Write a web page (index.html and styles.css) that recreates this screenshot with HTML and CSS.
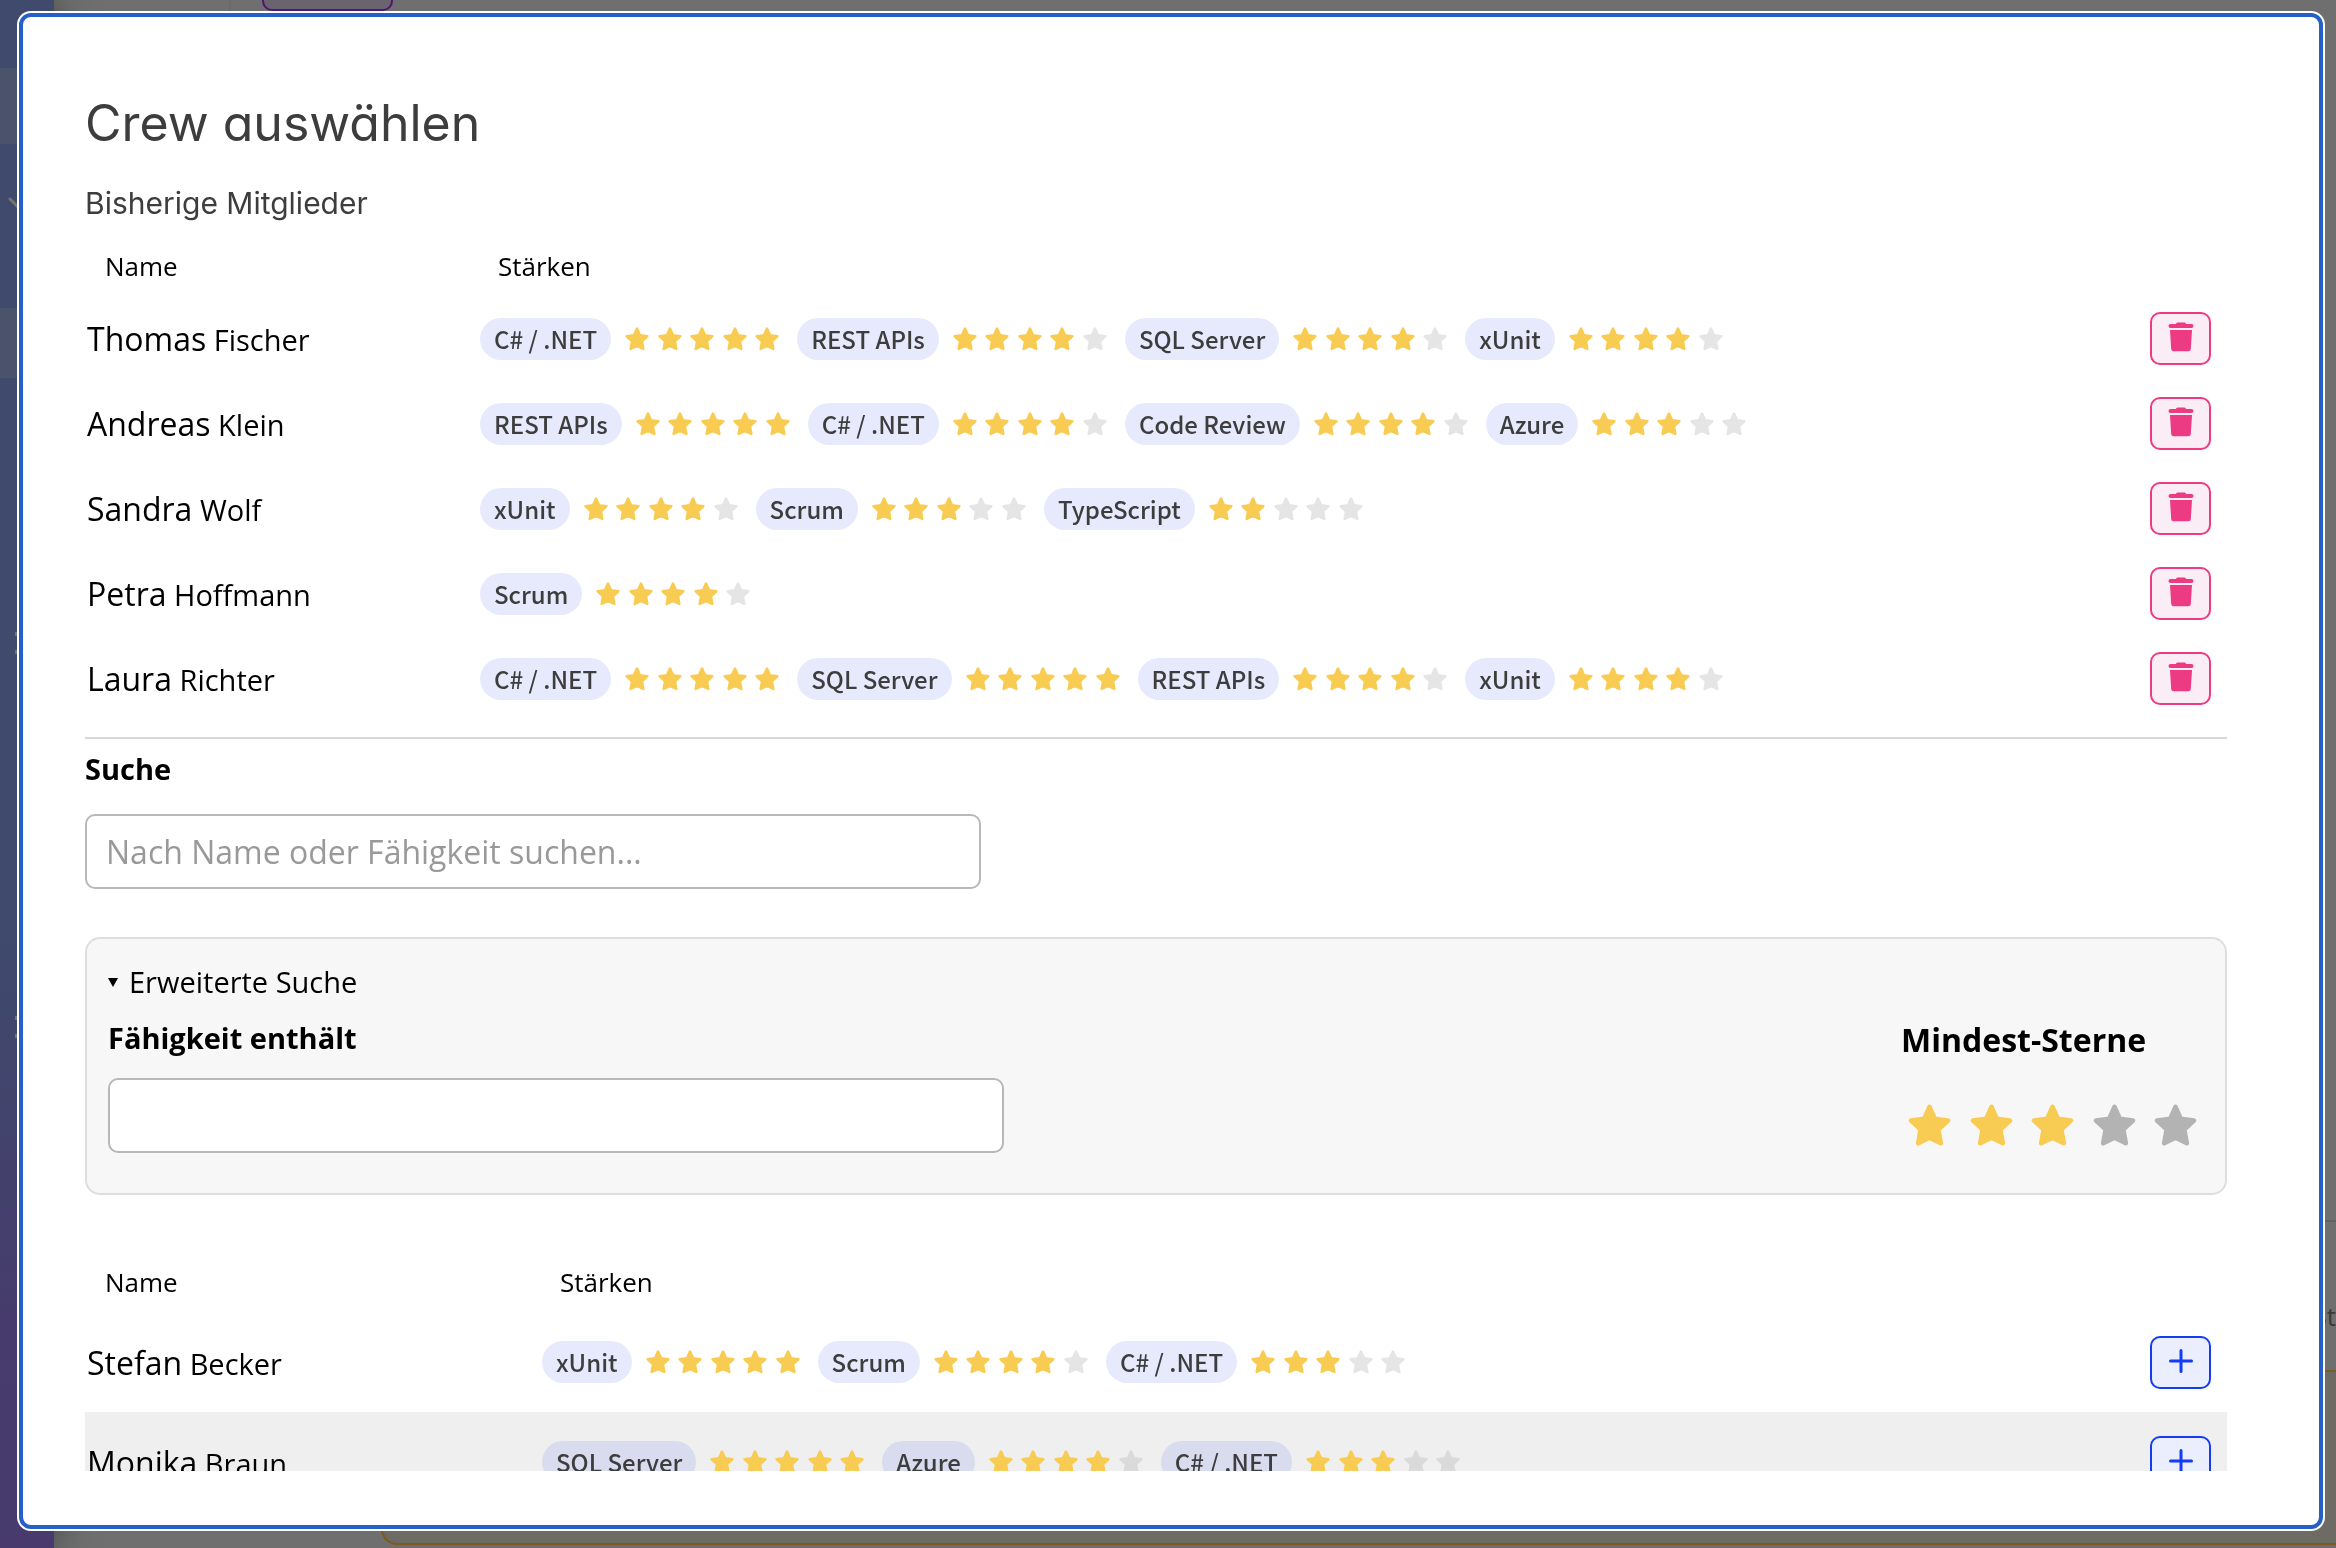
FILE: index.html
```html
<!DOCTYPE html>
<html lang="de">
<head>
<meta charset="utf-8">
<title>Crew auswählen</title>
<link rel="stylesheet" href="styles.css">
</head>
<body>
<svg class="sprite" aria-hidden="true">
  <symbol id="star" viewBox="0 0 24 24"><path d="M12 1.6 15 8.3 22.3 9.2 16.9 14.2 18.3 21.9 12 18.8 5.700 21.900 7.100 14.200 1.700 9.200 9 8.300Z" fill="currentColor" stroke="currentColor" stroke-width="2.600" stroke-linejoin="round"/></symbol>
  <symbol id="trash" viewBox="0 0 26 30"><path d="M9.500 0.500h7q1.500 0 1.500 1.500h5.500a2 2 0 0 1 0 4h-21a2 2 0 0 1 0-4h5.500q0-1.500 1.500-1.500zM2 8h22l-1.200 19a2.500 2.500 0 0 1-2.500 2.300h-14.600a2.500 2.500 0 0 1-2.500-2.300z" fill="currentColor"/></symbol>
  <symbol id="plus" viewBox="0 0 24 24"><path d="M12 1.500v21M1.500 12h21" stroke="currentColor" stroke-width="3" stroke-linecap="round" fill="none"/></symbol>
</svg>

<div class="page">
  <aside class="sidebar">
    <div class="side-item side-item-first"></div>
    <div class="side-group"><svg class="chevron" viewBox="0 0 20 12"><path d="M2 2l8 8 8-8" fill="none" stroke="currentColor" stroke-width="3" stroke-linecap="round"/></svg></div>
    <div class="side-item"></div>
    <div class="side-more"><i class="dots"></i><i class="dots"></i></div>
  </aside>
  <main class="main">
    <div class="toolbar"><div class="tool"></div></div>
    <div class="board"><div class="board-row">St</div></div>
    <div class="note"></div>
  </main>
</div>

<dialog class="modal" open aria-labelledby="title">
  <div class="scroller">
    <h1 class="title" id="title">Crew auswählen</h1>
    <h2 class="subtitle">Bisherige Mitglieder</h2>
    <table class="crew members">
      <thead><tr><th class="col-name">Name</th><th class="col-skills">Stärken</th><th class="col-action"></th></tr></thead>
      <tbody id="members"></tbody>
    </table>
    <hr class="rule">
    <label class="label" for="search">Suche</label>
    <input class="field" id="search" type="text" placeholder="Nach Name oder Fähigkeit suchen...">
    <details class="advanced" open>
      <summary class="summary">Erweiterte Suche</summary>
      <div class="filters">
        <div>
          <label class="label" for="skill">Fähigkeit enthält</label>
          <input class="field" id="skill" type="text">
        </div>
        <fieldset class="minimum">
          <legend class="legend">Mindest-Sterne</legend>
          <div class="rating" id="rating"></div>
        </fieldset>
      </div>
    </details>
    <table class="crew candidates">
      <thead><tr><th class="col-name">Name</th><th class="col-skills">Stärken</th><th class="col-action"></th></tr></thead>
      <tbody id="candidates"></tbody>
    </table>
  </div>
</dialog>
<script src="crew.js"></script>
</body>
</html>
```
FILE: crew.js
```js
const members = [
  ["Thomas", "Fischer", [["C# / .NET", 5], ["REST APIs", 4], ["SQL Server", 4], ["xUnit", 4]]],
  ["Andreas", "Klein", [["REST APIs", 5], ["C# / .NET", 4], ["Code Review", 4], ["Azure", 3]]],
  ["Sandra", "Wolf", [["xUnit", 4], ["Scrum", 3], ["TypeScript", 2]]],
  ["Petra", "Hoffmann", [["Scrum", 4]]],
  ["Laura", "Richter", [["C# / .NET", 5], ["SQL Server", 5], ["REST APIs", 4], ["xUnit", 4]]]
];
const candidates = [
  ["Stefan", "Becker", [["xUnit", 5], ["Scrum", 4], ["C# / .NET", 3]]],
  ["Monika", "Braun", [["SQL Server", 5], ["Azure", 4], ["C# / .NET", 3]]]
];

const icon = (id, cls) => `<svg class="${cls}"><use href="#${id}"/></svg>`;
const star = (on) => icon("star", on ? "star on" : "star");
const steps = [1, 2, 3, 4, 5];

function row([first, last, skills], kind, symbol, verb) {
  const list = skills.map(([name, n]) =>
    `<li class="skill"><span class="chip">${name}</span><span class="stars" role="img" aria-label="${n} von 5">${steps.map((i) => star(i <= n)).join("")}</span></li>`
  ).join("");
  return `<tr><td class="name"><span class="first">${first}</span> ${last}</td>
    <td><ul class="skills">${list}</ul></td>
    <td class="action"><button class="btn ${kind}" type="button" aria-label="${first} ${last} ${verb}">${icon(symbol, "btn-icon")}</button></td></tr>`;
}

document.getElementById("members").innerHTML =
  members.map((m) => row(m, "remove", "trash", "entfernen")).join("");
document.getElementById("candidates").innerHTML =
  candidates.map((m) => row(m, "add", "plus", "hinzufügen")).join("");
document.getElementById("rating").innerHTML = steps.map((i) =>
  `<label class="rate"><input class="rate-input" type="radio" name="stars" value="${i}" aria-label="${i} Sterne"${i === 3 ? " checked" : ""}>${star(i <= 3)}</label>`
).join("");
```
FILE: styles.css
```css
* { box-sizing: border-box; }

body {
  margin: 0;
  font-family: "Open Sans", "Noto Sans", sans-serif;
  color: #000;
  background: #6f6f6f;
}

.sprite { position: absolute; width: 0; height: 0; }

/* Dimmed page under the dialog */
.page { display: flex; height: 100vh; overflow: hidden; }
.sidebar {
  flex: none;
  width: 54px;
  padding-top: 68px;
  background: linear-gradient(#3f4a6c 0%, #3f4a6c 60%, #463c6c 85%, #483a6c 100%);
  box-shadow: 0 0 40px #3c4242;
}
.side-item { height: 70px; background: #4a526c; }
.side-item-first { height: 76px; }
.side-group { height: 164px; padding: 48px 0 0 8px; color: #77756f; }
.chevron { width: 20px; height: 12px; }
.side-more { display: grid; gap: 362px; padding: 254px 0 0 15px; }
.dots { width: 4px; height: 22px; border: solid #77756f; border-width: 4px 0; }
.main { flex: 1; display: flex; flex-direction: column; padding-bottom: 3px; }
.toolbar { height: 11px; margin-left: 175px; padding-left: 31px; border-left: 2px solid #6a6a6a; }
.tool {
  width: 131px;
  height: 11px;
  border: 2px solid #541470;
  border-top: 0;
  border-radius: 0 0 10px 10px;
  background: #6a6470;
}
.board { flex: 1; display: flex; flex-direction: column; justify-content: flex-end; }
.board-row {
  height: 150px;
  padding-top: 76px;
  border-top: 2px solid #626262;
  font-size: 26px;
  line-height: 36px;
  text-align: right;
  color: #3a3a3a;
}
.note {
  height: 175px;
  margin-left: 327px;
  border: 2px solid #7d5a1e;
  border-right: 0;
  border-radius: 16px 0 0 16px;
  background: #6d6b63;
}

/* Dialog */
.modal {
  position: fixed;
  inset: 13px 13px 19px 19px;
  width: auto;
  height: auto;
  max-width: none;
  max-height: none;
  margin: 0;
  padding: 70px 92px 54px 62px;
  overflow: hidden;
  border: 4px solid #255fc8;
  border-radius: 12px;
  background: #fff;
  box-shadow: 0 0 0 2px #fff;
  color: #000;
}
.scroller { height: 100%; overflow: hidden; }

.title, .subtitle {
  margin: 0;
  font-family: Inter, sans-serif;
  font-feature-settings: "cv11";
  font-weight: 400;
  color: #3d3d3d;
}
.title { font-size: 50px; line-height: 72px; }
.subtitle { margin-top: 20px; font-size: 30px; line-height: 48px; }

/* Crew tables */
.crew { width: 100%; border-collapse: collapse; table-layout: fixed; }
.crew th {
  height: 60px;
  padding: 0 20px;
  font-size: 26px;
  font-weight: 400;
  line-height: 36px;
  text-align: left;
}
.crew .col-skills { padding-left: 18px; }
.crew td { height: 85px; padding: 0; }
.members { margin-top: 9px; }
.members .col-name { width: 395px; }
.candidates .col-name { width: 457px; }
.crew .col-action { width: 77px; padding: 0; }
.candidates td { height: 100px; }
.candidates tr:nth-child(even) td { background: #efefef; }
.crew .name { padding: 2px 0 0 2px; font-size: 29px; line-height: 44px; white-space: nowrap; }
.first { font-size: 32px; }
.skills { display: flex; gap: 18px; margin: 0; padding: 0; list-style: none; }
.skill { display: flex; align-items: center; gap: 14px; }
.chip {
  padding: 0 14px;
  border-radius: 21px;
  background: #e7eafd;
  color: #3d3d3d;
  font-family: "Noto Sans CJK SC", sans-serif;
  font-size: 24px;
  font-weight: 500;
  line-height: 42px;
  white-space: nowrap;
}
.stars { display: flex; justify-content: space-between; width: 154px; }
.star { width: 24px; height: 24px; color: #e5e5e5; }
.star.on { color: #f8cb52; }
.candidates tr:nth-child(even) .chip { background: #d9dcee; }
.candidates tr:nth-child(even) .star:not(.on) { color: #dadada; }

.btn {
  display: flex;
  align-items: center;
  justify-content: center;
  width: 61px;
  height: 53px;
  padding: 0 0 3px;
  border: 2px solid;
  border-radius: 10px;
}
.remove { background: #fbedf5; border-color: #ec3a83; color: #ec3a83; }
.add { background: #ebeffd; border-color: #153bf5; color: #153bf5; }
.btn-icon { width: 26px; height: 30px; }
.add .btn-icon { width: 24px; height: 24px; }

/* Search */
.rule { height: 2px; margin: 16px 0 10px; border: 0; background: #d8d8d8; }
.label { display: block; font-size: 29px; font-weight: 700; line-height: 40px; }
.field {
  display: block;
  width: 896px;
  max-width: 100%;
  height: 75px;
  margin: 25px 0 0;
  padding: 0 19px;
  border: 2px solid #b8b8b8;
  border-radius: 10px;
  background: #fff;
  font: 32px "Open Sans", "Noto Sans", sans-serif;
}
.field::placeholder { color: #999; opacity: 1; }
.advanced {
  margin: 48px 0 57px;
  padding: 21px 21px 40px;
  border: 2px solid #dedede;
  border-radius: 15px;
  background: #f7f7f7;
}
.advanced .field { margin-top: 20px; }
.summary { display: flex; align-items: center; gap: 11px; font-size: 29px; line-height: 44px; list-style: none; }
.summary::before {
  content: "";
  border: solid transparent;
  border-width: 9px 5px 0;
  border-top-color: #000;
}
.filters { display: flex; justify-content: space-between; margin-top: 14px; }
.minimum { width: 303px; margin: 0; padding: 0; border: 0; }
.legend { padding: 0; font-size: 32px; font-weight: 700; line-height: 44px; }
.rating { display: flex; justify-content: space-between; padding: 42px 7px 0; }
.rate { display: grid; }
.rate-input { grid-area: 1 / 1; margin: 0; opacity: 0; }
.rate .star { grid-area: 1 / 1; width: 43px; height: 43px; color: #b3b3b3; }
.rate .star.on { color: #f8cb52; }
```
